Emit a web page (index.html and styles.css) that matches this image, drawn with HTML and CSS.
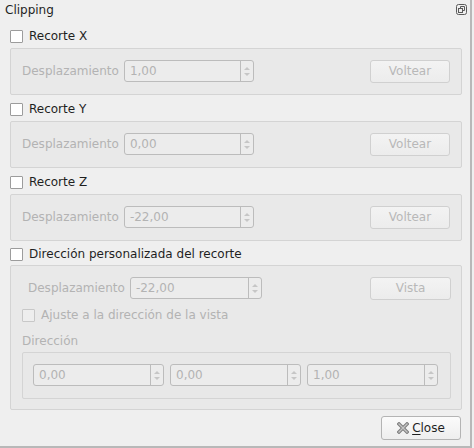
FILE: index.html
```html
<!DOCTYPE html>
<html>
<head>
<meta charset="utf-8">
<link rel="stylesheet" href="styles.css">
</head>
<body>
<div class="dock">
  <div class="titlebar">
    <span class="title">Clipping</span>
    <svg class="float" width="11" height="11" viewBox="0 0 11 11">
      <rect x="0.5" y="0.5" width="10" height="10" rx="2" fill="none" stroke="#5a5a5a"/>
      <rect x="2.5" y="4.5" width="4" height="4" fill="none" stroke="#5a5a5a"/>
      <path d="M4.5 4.5V2.5h4v4h-2" fill="none" stroke="#5a5a5a"/>
    </svg>
  </div>
  <div class="content">
    <div class="check-row first"><span class="cb"></span><span>Recorte X</span></div>
    <div class="frame">
      <div class="row">
        <span class="dis lbl">Desplazamiento</span>
        <div class="spin w130"><span class="val">1,00</span><span class="arrows"><i class="up"></i><i class="dn"></i></span></div>
        <span class="fill"></span>
        <div class="btn">Voltear</div>
      </div>
    </div>

    <div class="check-row"><span class="cb"></span><span>Recorte Y</span></div>
    <div class="frame">
      <div class="row">
        <span class="dis lbl">Desplazamiento</span>
        <div class="spin w130"><span class="val">0,00</span><span class="arrows"><i class="up"></i><i class="dn"></i></span></div>
        <span class="fill"></span>
        <div class="btn">Voltear</div>
      </div>
    </div>

    <div class="check-row"><span class="cb"></span><span>Recorte Z</span></div>
    <div class="frame">
      <div class="row">
        <span class="dis lbl">Desplazamiento</span>
        <div class="spin w130"><span class="val">-22,00</span><span class="arrows"><i class="up"></i><i class="dn"></i></span></div>
        <span class="fill"></span>
        <div class="btn">Voltear</div>
      </div>
    </div>

    <div class="check-row last"><span class="cb"></span><span>Dirección personalizada del recorte</span></div>
    <div class="frame big">
      <div class="row">
        <span class="dis lbl indent">Desplazamiento</span>
        <div class="spin w132"><span class="val">-22,00</span><span class="arrows"><i class="up"></i><i class="dn"></i></span></div>
        <span class="fill"></span>
        <div class="btn w81">Vista</div>
      </div>
      <div class="sub-check"><span class="cb dcb"></span><span class="dis">Ajuste a la dirección de la vista</span></div>
      <div class="dis dir-label">Dirección</div>
      <div class="inner-frame">
        <div class="spin w131"><span class="val">0,00</span><span class="arrows"><i class="up"></i><i class="dn"></i></span></div>
        <div class="spin w131"><span class="val">0,00</span><span class="arrows"><i class="up"></i><i class="dn"></i></span></div>
        <div class="spin w131"><span class="val">1,00</span><span class="arrows"><i class="up"></i><i class="dn"></i></span></div>
      </div>
    </div>

    <div class="footer">
      <div class="close-btn">
        <svg width="12" height="12" viewBox="0 0 12 12">
          <path d="M2 2L10 10M10 2L2 10" stroke="#7d7d7d" stroke-width="3.4" stroke-linecap="square"/>
          <path d="M2 2L10 10M10 2L2 10" stroke="#c4c4c4" stroke-width="1.4" stroke-linecap="square"/>
        </svg>
        <span><u>C</u>lose</span>
      </div>
    </div>
  </div>
</div>
</body>
</html>
```

FILE: styles.css
```css
* { box-sizing: border-box; }
html, body {
  margin: 0;
  padding: 0;
  background: #efefef;
  font-family: "DejaVu Sans", "Noto Sans", sans-serif;
  font-size: 12px;
  color: #1f1f1f;
}
.dock {
  width: 472px;
  height: 448px;
  border-right: 2px solid #b8b8b8;
  border-bottom: 2px solid #b8b8b8;
}
.titlebar {
  height: 21px;
  display: flex;
  align-items: center;
  justify-content: space-between;
  padding: 0 5px 0 5px;
}
.title { line-height: 14px; margin-top: -1px; }
.float { margin-top: -2px; margin-right: -2px; }
.content {
  padding: 0 8px 0 10px;
}
.check-row {
  display: flex;
  align-items: center;
  height: 13px;
  margin-top: 8px;
  margin-bottom: 5px;
  line-height: 13px;
}
.check-row.first { margin-top: 9px; }
.check-row.last { margin-top: 7px; margin-bottom: 4px; }
.cb {
  width: 13px;
  height: 13px;
  border: 1px solid #9c9c9c;
  border-radius: 1px;
  background: #ffffff;
  margin-right: 6px;
  flex: none;
}
.dcb {
  background: #eeeeee;
  border-color: #c8c8c8;
}
.frame {
  border: 1px solid #d4d4d4;
  border-radius: 2px;
  background: #e9e9e9;
  padding: 11px 11px 11px 11px;
  height: 47px;
}
.frame.big {
  height: 145px;
  padding: 11px 10px 10px 11px;
}
.row {
  display: flex;
  align-items: center;
  height: 22px;
}
.fill { flex: 1; }
.dis { color: #b3b3b3; }
.lbl { margin-right: 5px; }
.lbl.indent { margin-left: 6px; }
.spin {
  height: 22px;
  border: 1px solid #bcbcbc;
  border-radius: 3px;
  background: #ececec;
  display: flex;
  align-items: stretch;
  flex: none;
}
.w130 { width: 130px; }
.w131 { width: 131px; }
.w132 { width: 132px; }
.val {
  flex: 1;
  color: #b3b3b3;
  padding-left: 5px;
  line-height: 20px;
}
.arrows {
  width: 13px;
  border-left: 1px solid #bcbcbc;
  display: flex;
  flex-direction: column;
  align-items: center;
  justify-content: center;
  gap: 3px;
}
.arrows i {
  display: block;
  width: 0;
  height: 0;
  border-left: 3px solid transparent;
  border-right: 3px solid transparent;
}
.arrows .up { border-bottom: 3px solid #c6c6c6; }
.arrows .dn { border-top: 3px solid #c6c6c6; }
.btn {
  width: 80px;
  height: 23px;
  border: 1px solid #d0d0d0;
  border-radius: 3px;
  background: linear-gradient(#f3f3f3, #ececec);
  color: #b8b8b8;
  display: flex;
  align-items: center;
  justify-content: center;
  flex: none;
}
.btn.w81 { width: 81px; }
.sub-check {
  display: flex;
  align-items: center;
  height: 13px;
  margin-top: 10px;
  line-height: 13px;
}
.dir-label {
  margin-top: 11px;
  height: 16px;
  line-height: 16px;
}
.inner-frame {
  margin-top: 3px;
  width: 429px;
  height: 47px;
  border: 1px solid #d4d4d4;
  border-radius: 2px;
  background: #e8e8e8;
  padding: 11px 12px 11px 10px;
  display: flex;
  gap: 6px;
}
.inner-frame .spin { height: 22px; }
.footer {
  display: flex;
  justify-content: flex-end;
  margin-top: 6px;
}
.close-btn {
  width: 80px;
  height: 24px;
  margin-right: 1px;
  border: 1px solid #b4b4b4;
  border-radius: 3px;
  background: linear-gradient(#fbfbfb, #eeeeee);
  display: flex;
  align-items: center;
  justify-content: center;
  gap: 3px;
  color: #1f1f1f;
}
.close-btn u { text-decoration-thickness: 1px; text-underline-offset: 2px; }
```
